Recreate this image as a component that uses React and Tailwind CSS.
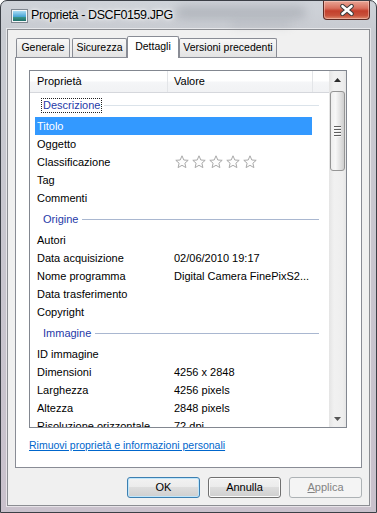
import React from "react";

function Star() {
  return (
    <svg width="14" height="14" viewBox="0 0 14 14" className="mr-[3px] shrink-0">
      <polygon
        points="7,0.8 8.8,5 13.2,5.3 9.9,8.2 10.9,12.6 7,10.3 3.1,12.6 4.1,8.2 0.8,5.3 5.2,5"
        fill="#fdfdfd"
        stroke="#a9a9a9"
        strokeWidth="1"
        strokeLinejoin="round"
      />
    </svg>
  );
}

const groups = [
  {
    name: "Descrizione",
    focus: true,
    items: [
      ["Titolo", "", "sel"],
      ["Oggetto", ""],
      ["Classificazione", "stars"],
      ["Tag", ""],
      ["Commenti", ""],
    ],
  },
  {
    name: "Origine",
    items: [
      ["Autori", ""],
      ["Data acquisizione", "02/06/2010 19:17"],
      ["Nome programma", "Digital Camera FinePixS2..."],
      ["Data trasferimento", ""],
      ["Copyright", ""],
    ],
  },
  {
    name: "Immagine",
    items: [
      ["ID immagine", ""],
      ["Dimensioni", "4256 x 2848"],
      ["Larghezza", "4256 pixels"],
      ["Altezza", "2848 pixels"],
      ["Risoluzione orizzontale", "72 dpi"],
    ],
  },
];

function GroupRow({ name, focus }) {
  return (
    <div className="flex h-[24px] shrink-0 items-center pl-[11px] pr-[10px]">
      <span
        className={
          "px-[1px] leading-[13px] text-[#1f3aa8] border border-dotted " +
          (focus ? "border-[#222]" : "border-transparent")
        }
      >
        {name}
      </span>
      <div className={"ml-[2px] h-px flex-1 " + (focus ? "bg-[#dbe3ea]" : "bg-[#a9b7d0]")} />
    </div>
  );
}

function ItemRow({ label, value, sel }) {
  return (
    <div
      className={
        "ml-[5px] flex h-[18px] w-[277px] shrink-0 items-center " +
        (sel ? "bg-[#3399ff] text-white" : "text-black")
      }
    >
      <div className="w-[139px] shrink-0 whitespace-nowrap pl-[2px]">{label}</div>
      <div className="flex items-center whitespace-nowrap">
        {value === "stars" ? (
          <div className="ml-[1px] flex items-center">
            <Star />
            <Star />
            <Star />
            <Star />
            <Star />
          </div>
        ) : (
          value
        )}
      </div>
    </div>
  );
}

function Tab({ label, w, selected, extra }) {
  if (selected) {
    return (
      <div
        className={
          "relative z-10 -mb-px flex h-[22px] items-center justify-center whitespace-nowrap rounded-t-[2px] border border-b-0 border-[#898c95] bg-white pb-[1px] text-[10.5px] " +
          w
        }
      >
        {label}
      </div>
    );
  }
  return (
    <div
      className={
        "flex h-[19px] items-center justify-center whitespace-nowrap rounded-t-[2px] border border-b-0 border-[#898c95] bg-[linear-gradient(180deg,#f8f8f8_0%,#ededed_50%,#e3e3e3_100%)] text-[10.5px] " +
        w +
        " " +
        (extra || "")
      }
    >
      {label}
    </div>
  );
}

export default function App() {
  return (
    <div className="relative h-[513px] w-[377px] overflow-hidden rounded-t-[7px] border border-[#3b3f46] bg-[linear-gradient(180deg,#cfd3d9_0%,#c8cbd1_6%,#c8c5ce_55%,#c9c1cc_100%)] font-['Segoe_UI','Liberation_Sans',Arial,sans-serif] text-[11px] text-black">
      {/* glass blur decoration */}
      <div className="absolute left-[175px] top-[5px] h-[13px] w-[130px] rounded-full bg-[#8e939b] opacity-40 blur-[5px]" />
      <div className="absolute left-[230px] top-[20px] h-[6px] w-[60px] rounded-full bg-[#9a9ea6] opacity-30 blur-[4px]" />

      {/* close button */}
      <div className="absolute right-[6px] top-0 flex h-[19px] w-[47px] items-center justify-center rounded-b-[4px] border border-t-0 border-[#5c2a24] bg-[linear-gradient(180deg,#e9a595_0%,#d9705e_40%,#c33f2c_55%,#c8503a_80%,#de8a6e_100%)] shadow-[inset_0_0_0_1px_rgba(255,220,210,0.45)]">
        <svg width="16" height="12" viewBox="0 0 16 12">
          <path d="M3.5 2.2 L12.5 9.8 M12.5 2.2 L3.5 9.8" stroke="#3b3b3b" strokeWidth="4.6" strokeLinecap="round" />
          <path d="M3.5 2.2 L12.5 9.8 M12.5 2.2 L3.5 9.8" stroke="#ffffff" strokeWidth="2.6" strokeLinecap="round" />
        </svg>
      </div>

      {/* title bar */}
      <div className="relative flex h-[28px] items-center pl-[10px]">
        <svg width="17" height="14" viewBox="0 0 17 14" className="mr-[2px] mt-[1px]">
          <defs>
            <linearGradient id="sky" x1="0" y1="0" x2="0" y2="1">
              <stop offset="0" stopColor="#a9dcf4" />
              <stop offset="0.55" stopColor="#4aa6d6" />
              <stop offset="0.56" stopColor="#3d9a8c" />
              <stop offset="1" stopColor="#1f6f6a" />
            </linearGradient>
          </defs>
          <rect x="0.5" y="0.5" width="16" height="13" fill="#f4f6f8" stroke="#7f868f" />
          <rect x="2" y="2" width="13" height="10" fill="url(#sky)" />
        </svg>
        <span className="ml-[1px] text-[12.5px] tracking-[-0.4px] text-black [text-shadow:0_0_6px_#fff,0_0_3px_#fff]">
          Proprietà - DSCF0159.JPG
        </span>
      </div>

      {/* client area */}
      <div className="mx-[6px] border border-[#8b8d92] bg-[#f0f0f0] px-[7px] pb-[7px] pt-[6px] shadow-[0_0_0_1px_rgba(255,255,255,0.55)]">
        {/* tabs */}
        <div className="flex h-[21px] items-end pl-[1px]">
          <Tab label="Generale" w="w-[54px]" />
          <Tab label="Sicurezza" w="w-[55px]" extra="ml-[2px]" />
          <Tab label="Dettagli" w="w-[52px]" selected />
          <Tab label="Versioni precedenti" w="w-[98px]" />
        </div>

        {/* panel */}
        <div className="h-[411px] w-[347px] border border-[#898c95] bg-white pl-[13px] pt-[12px]">
          <div className="flex h-[358px] w-[318px] border border-[#828790] bg-white">
            {/* list content */}
            <div className="flex h-full w-[299px] flex-col overflow-hidden">
              <div className="flex h-[22px] shrink-0 border-b border-[#d5d7dc] bg-[linear-gradient(180deg,#ffffff_0%,#ffffff_45%,#f4f5f7_55%,#f1f2f4_100%)]">
                <div className="flex h-full w-[138px] items-center border-r border-[#e3e5e8] pl-[7px]">Proprietà</div>
                <div className="flex h-full w-[145px] items-center border-r border-[#e3e5e8] pl-[6px]">Valore</div>
              </div>
              {groups.map((g) => (
                <React.Fragment key={g.name}>
                  <GroupRow name={g.name} focus={g.focus} />
                  {g.items.map(([label, value, sel]) => (
                    <ItemRow key={label} label={label} value={value} sel={sel === "sel"} />
                  ))}
                </React.Fragment>
              ))}
            </div>

            {/* scrollbar */}
            <div className="flex h-full w-[17px] flex-col bg-[linear-gradient(90deg,#e4e4e4_0%,#f1f1f1_30%,#eeeeee_80%,#e6e6e6_100%)]">
              <div className="flex h-[17px] shrink-0 items-center justify-center">
                <svg width="7" height="4" viewBox="0 0 7 4">
                  <polygon points="3.5,0 7,4 0,4" fill="#2b2b2b" />
                </svg>
              </div>
              <div className="flex-1 pt-[3px]">
                <div className="ml-[1px] flex h-[80px] w-[15px] items-center justify-center rounded-[3px] border border-[#959595] bg-[linear-gradient(90deg,#eeeeee_0%,#f7f7f7_35%,#e2e2e2_70%,#cfcfcf_100%)]">
                  <div className="flex flex-col gap-[2px]">
                    <div className="h-px w-[7px] bg-[#5e5e5e] shadow-[0_1px_0_#fafafa]" />
                    <div className="h-px w-[7px] bg-[#5e5e5e] shadow-[0_1px_0_#fafafa]" />
                    <div className="h-px w-[7px] bg-[#5e5e5e] shadow-[0_1px_0_#fafafa]" />
                    <div className="h-px w-[7px] bg-[#5e5e5e] shadow-[0_1px_0_#fafafa]" />
                  </div>
                </div>
              </div>
              <div className="flex h-[17px] shrink-0 items-center justify-center">
                <svg width="7" height="4" viewBox="0 0 7 4">
                  <polygon points="0,0 7,0 3.5,4" fill="#555555" />
                </svg>
              </div>
            </div>
          </div>

          <div className="mt-[11px] h-[13px] text-[10.5px] leading-[13px]">
            <span className="text-[#0066cc] underline decoration-[#0066cc]">
              Rimuovi proprietà e informazioni personali
            </span>
          </div>
        </div>

        {/* buttons */}
        <div className="mt-[9px] flex justify-end gap-[8px]">
          <div className="flex h-[21px] w-[73px] items-center justify-center rounded-[3px] border border-[#3c7fb1] bg-[linear-gradient(180deg,#f2f2f2_0%,#ebebeb_50%,#dddddd_50%,#cfcfcf_100%)] shadow-[inset_0_0_0_1px_#bfe6fb]">
            OK
          </div>
          <div className="flex h-[21px] w-[73px] items-center justify-center rounded-[3px] border border-[#707070] bg-[linear-gradient(180deg,#f2f2f2_0%,#ebebeb_50%,#dddddd_50%,#cfcfcf_100%)] shadow-[inset_0_0_0_1px_#fcfcfc]">
            Annulla
          </div>
          <div className="flex h-[21px] w-[73px] items-center justify-center rounded-[3px] border border-[#adb2b5] bg-[#f4f4f4] text-[#838383]">
            <span>
              <span className="underline">A</span>pplica
            </span>
          </div>
        </div>
      </div>
    </div>
  );
}
